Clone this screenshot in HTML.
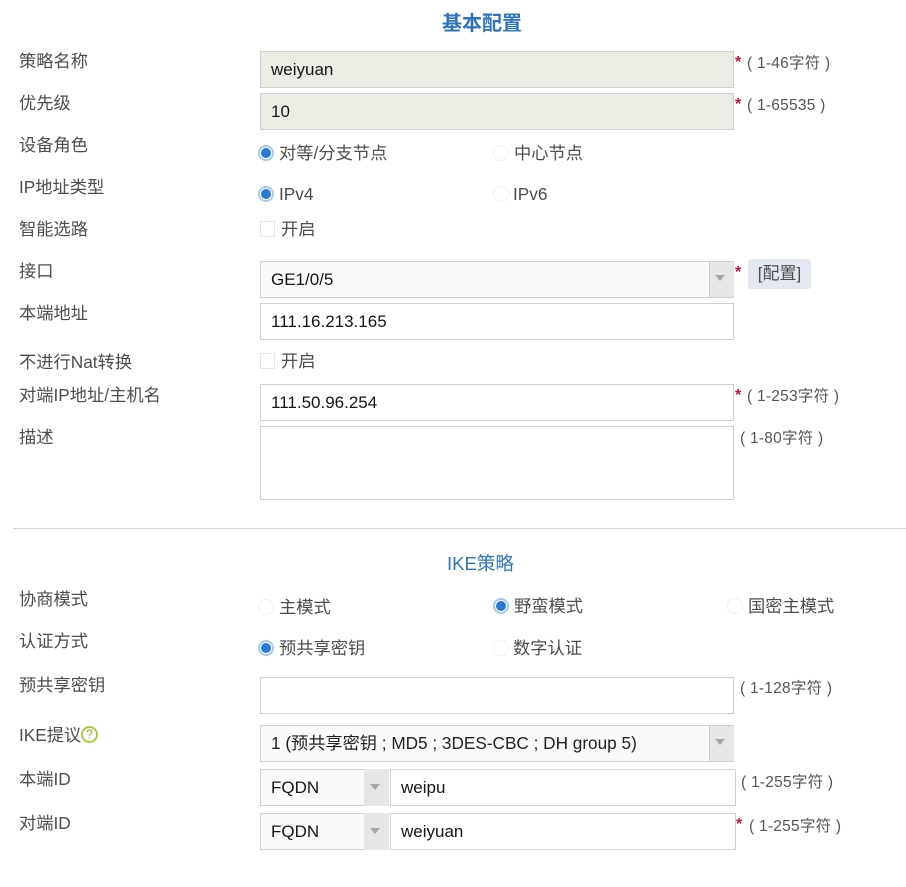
<!DOCTYPE html>
<html lang="zh"><head><meta charset="utf-8"><style>
html,body{margin:0;padding:0;background:#fff}
#p{position:relative;width:906px;height:887px;overflow:hidden;background:#fff;font-family:"Liberation Sans","Noto Sans CJK SC",sans-serif;font-size:17.25px;color:#4a4a4a;filter:blur(.35px)}
#p div{position:absolute;box-sizing:border-box;white-space:nowrap}
.l{left:19px;line-height:20px;height:20px;color:#4d4d4d}
.i{border:1.5px solid #cfcfcf;background:#fff;color:#151515;line-height:35px;padding-left:10px;height:37px;font-size:17px}
.d{background:#ecece4}
.s{background:#fafafa}
.b{width:25px;background:#e6e6e6;border-left:1px solid #ccc}
.t{width:0;height:0;border-left:5.5px solid transparent;border-right:5.5px solid transparent;border-top:6px solid #a6a6a6}
.r{width:16px;height:16px;border-radius:50%;border:1px solid #f0f0f0;background:#fff}
.c{border:2px solid #a9c8ee}
.c:after{content:"";position:absolute;left:1px;top:1px;width:10px;height:10px;border-radius:50%;background:#2a78d6}
.v{line-height:20px;height:20px;color:#4d4d4d}
.h{font-size:15.5px;line-height:18px;height:18px;color:#555;letter-spacing:.25px}
.k{color:#c8102e;font-size:16px;line-height:16px;font-weight:bold}
.cb{width:15px;height:16px;border:1px solid #e5e5e5;background:#fff}
.ti{color:#2f75bb;line-height:24px;height:24px}
</style></head><body><div id="p">
<div class="ti" style="left:442px;top:12px;font-size:20px;font-weight:bold">基本配置</div>
<div class="l" style="top:51px">策略名称</div>
<div class="i d" style="left:260px;top:51px;width:474px">weiyuan</div>
<div class="k" style="left:735px;top:55px">*</div><div class="h" style="left:747px;top:55px">( 1-46字符 )</div>
<div class="l" style="top:93px">优先级</div>
<div class="i d" style="left:260px;top:93px;width:474px">10</div>
<div class="k" style="left:735px;top:97px">*</div><div class="h" style="left:747px;top:97px">( 1-65535 )</div>
<div class="l" style="top:135px">设备角色</div>
<div class="r c" style="left:258px;top:145px"></div><div class="v" style="left:279px;top:143px">对等/分支节点</div>
<div class="r" style="left:493px;top:145px"></div><div class="v" style="left:514px;top:143px">中心节点</div>
<div class="l" style="top:177px">IP地址类型</div>
<div class="r c" style="left:258px;top:186px"></div><div class="v" style="left:279px;top:184px">IPv4</div>
<div class="r" style="left:493px;top:186px"></div><div class="v" style="left:513px;top:184px">IPv6</div>
<div class="l" style="top:219px">智能选路</div>
<div class="cb" style="left:260px;top:221px"></div><div class="v" style="left:281px;top:219px">开启</div>
<div class="l" style="top:261px">接口</div>
<div class="i s" style="left:260px;top:261px;width:474px">GE1/0/5</div>
<div class="b" style="left:709px;top:262px;height:35px"></div><div class="t" style="left:715px;top:275px"></div>
<div class="k" style="left:735px;top:265px">*</div>
<div style="left:748px;top:259px;width:63px;height:30px;background:#e3e8f0;border-radius:3px;color:#4d4d4d;text-align:center;line-height:30px;font-size:17px">[配置]</div>
<div class="l" style="top:303px">本端地址</div>
<div class="i" style="left:260px;top:303px;width:474px">111.16.213.165</div>
<div class="l" style="top:352px">不进行Nat转换</div>
<div class="cb" style="left:260px;top:353px"></div><div class="v" style="left:281px;top:351px">开启</div>
<div class="l" style="top:385px">对端IP地址/主机名</div>
<div class="i" style="left:260px;top:384px;width:474px">111.50.96.254</div>
<div class="k" style="left:735px;top:388px">*</div><div class="h" style="left:747px;top:388px">( 1-253字符 )</div>
<div class="l" style="top:427px">描述</div>
<div class="i" style="left:260px;top:426px;width:474px;height:74px"></div>
<div class="h" style="left:740px;top:430px">( 1-80字符 )</div>
<div style="left:13px;top:528px;width:893px;height:1px;background:#d5d5d5"></div>
<div class="ti" style="left:447px;top:552px;font-size:18.5px">IKE策略</div>
<div class="l" style="top:589px">协商模式</div>
<div class="r" style="left:258px;top:599px"></div><div class="v" style="left:279px;top:597px">主模式</div>
<div class="r c" style="left:493px;top:598px"></div><div class="v" style="left:514px;top:596px">野蛮模式</div>
<div class="r" style="left:727px;top:598px"></div><div class="v" style="left:748px;top:596px">国密主模式</div>
<div class="l" style="top:631px">认证方式</div>
<div class="r c" style="left:258px;top:640px"></div><div class="v" style="left:279px;top:638px">预共享密钥</div>
<div class="r" style="left:493px;top:640px"></div><div class="v" style="left:513px;top:638px">数字认证</div>
<div class="l" style="top:675px">预共享密钥</div>
<div class="i" style="left:260px;top:677px;width:474px"></div>
<div class="h" style="left:740px;top:680px">( 1-128字符 )</div>
<div class="l" style="top:725px">IKE提议</div>
<div style="left:81px;top:726px;width:17px;height:17px;border:2px solid #a5cf3f;border-radius:50%;color:#8ab32a;font-size:12px;line-height:13px;text-align:center">?</div>
<div class="i s" style="left:260px;top:725px;width:474px;color:#222;font-size:17.2px">1 (预共享密钥 ; MD5 ; 3DES-CBC ; DH group 5)</div>
<div class="b" style="left:709px;top:726px;height:35px"></div><div class="t" style="left:715px;top:739px"></div>
<div class="l" style="top:769px">本端ID</div>
<div class="i s" style="left:260px;top:769px;width:104px;border-right:0">FQDN</div>
<div class="b" style="left:364px;top:769px;height:37px;border:0"></div><div class="t" style="left:370px;top:784px"></div>
<div class="i" style="left:390px;top:769px;width:346px">weipu</div>
<div class="h" style="left:741px;top:774px">( 1-255字符 )</div>
<div class="l" style="top:813px">对端ID</div>
<div class="i s" style="left:260px;top:813px;width:104px;border-right:0">FQDN</div>
<div class="b" style="left:364px;top:813px;height:37px;border:0"></div><div class="t" style="left:370px;top:828px"></div>
<div class="i" style="left:390px;top:813px;width:346px">weiyuan</div>
<div class="k" style="left:736px;top:817px">*</div><div class="h" style="left:749px;top:818px">( 1-255字符 )</div>
</div></body></html>
